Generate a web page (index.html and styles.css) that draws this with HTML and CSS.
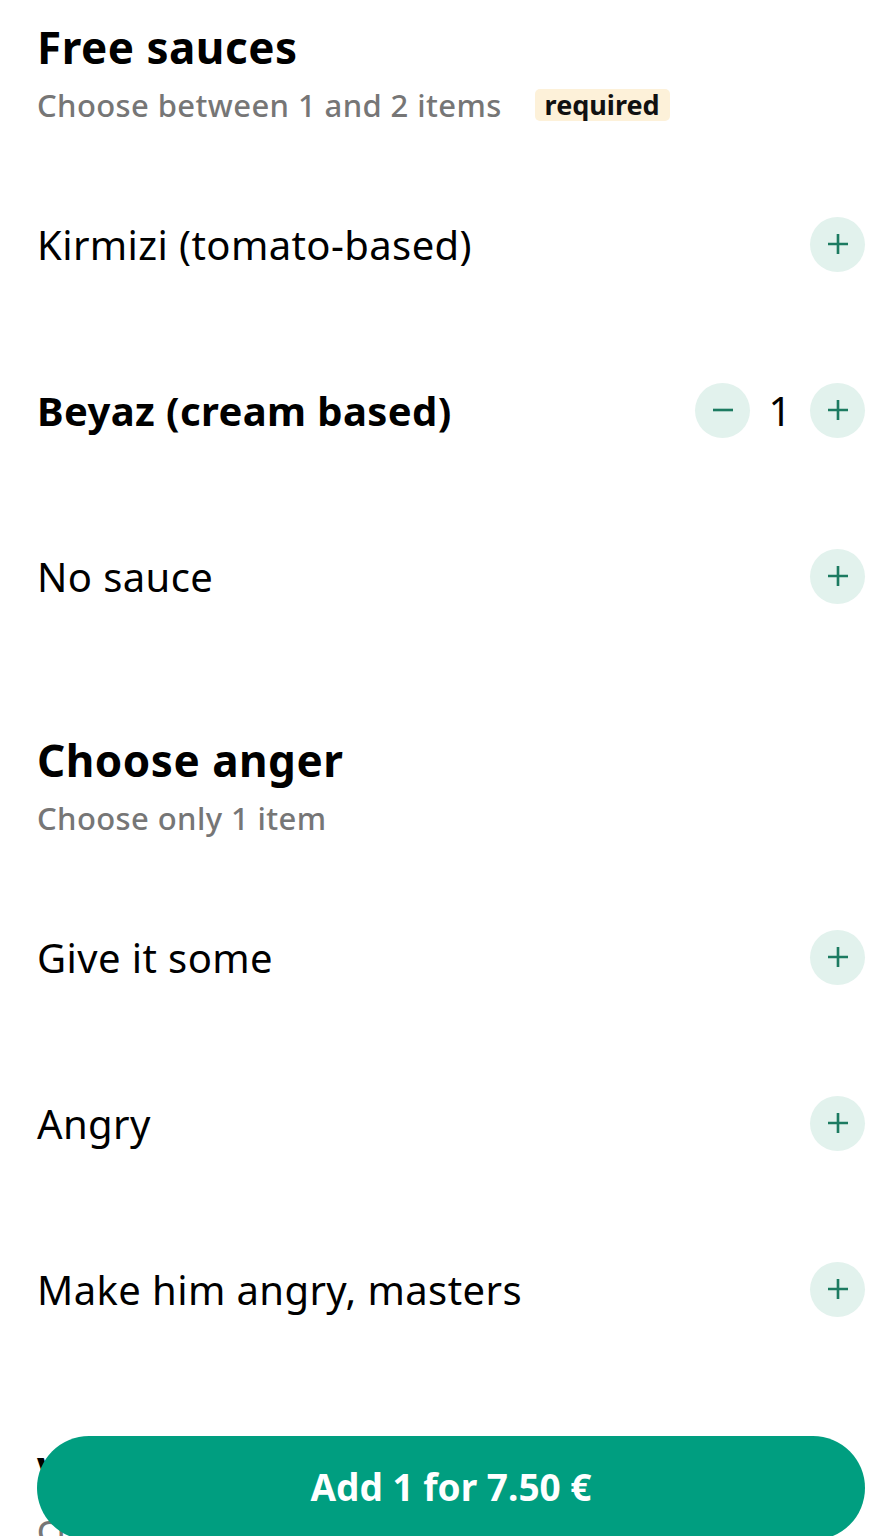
FILE: index.html
```html
<!DOCTYPE html>
<html>
<head>
    <meta charset="UTF-8">
    <title>Options</title>
    <link rel="stylesheet" href="styles.css">
</head>
<body>
    <div class="page">
        <div class="section">
            <div class="section-head">
                <h2>Free sauces</h2>
                <p class="hint">Choose between 1 and 2 items <span class="badge">required</span></p>
            </div>
            <div class="option">
                <span class="option-name">Kirmizi (tomato-based)</span>
                <div class="stepper">
                    <button class="round" type="button"><svg viewBox="0 0 24 24"><path d="M12 4v16M4 12h16"/></svg></button>
                </div>
            </div>
            <div class="option selected">
                <span class="option-name">Beyaz (cream based)</span>
                <div class="stepper">
                    <button class="round" type="button"><svg viewBox="0 0 24 24"><path d="M4 12h16"/></svg></button>
                    <span class="count">1</span>
                    <button class="round" type="button"><svg viewBox="0 0 24 24"><path d="M12 4v16M4 12h16"/></svg></button>
                </div>
            </div>
            <div class="option">
                <span class="option-name">No sauce</span>
                <div class="stepper">
                    <button class="round" type="button"><svg viewBox="0 0 24 24"><path d="M12 4v16M4 12h16"/></svg></button>
                </div>
            </div>
        </div>

        <div class="section">
            <div class="section-head">
                <h2>Choose anger</h2>
                <p class="hint">Choose only 1 item</p>
            </div>
            <div class="option">
                <span class="option-name">Give it some</span>
                <div class="stepper">
                    <button class="round" type="button"><svg viewBox="0 0 24 24"><path d="M12 4v16M4 12h16"/></svg></button>
                </div>
            </div>
            <div class="option">
                <span class="option-name">Angry</span>
                <div class="stepper">
                    <button class="round" type="button"><svg viewBox="0 0 24 24"><path d="M12 4v16M4 12h16"/></svg></button>
                </div>
            </div>
            <div class="option">
                <span class="option-name">Make him angry, masters</span>
                <div class="stepper">
                    <button class="round" type="button"><svg viewBox="0 0 24 24"><path d="M12 4v16M4 12h16"/></svg></button>
                </div>
            </div>
        </div>

        <div class="section">
            <div class="section-head">
                <h2>Vegetables</h2>
                <p class="hint">Choose up to 3 items</p>
            </div>
        </div>
    </div>

    <div class="footer">
        <button class="add-button" type="button">Add 1 for 7.50 €</button>
    </div>
</body>
</html>
```

FILE: styles.css
```css
body {
    font-family: "Noto Sans", Arial, sans-serif;
    background-color: #fff;
    color: #000;
    margin: 0;
    padding: 0;
}
.page {
    padding: 0 12px 0 37px;
}
.section {
    padding-top: 19px;
    margin-bottom: 54px;
}
.section-head {
    padding-bottom: 36px;
}
h2 {
    font-size: 44px;
    line-height: 56px;
    font-weight: 700;
    letter-spacing: 0.5px;
    margin: 0;
}
.hint {
    font-size: 31px;
    line-height: 40px;
    font-weight: 500;
    letter-spacing: 0.4px;
    color: #767676;
    margin: 10px 0 0;
    display: flex;
    align-items: center;
}
.badge {
    background-color: #fdf1d9;
    color: #111;
    font-size: 27px;
    font-weight: 700;
    line-height: 32px;
    letter-spacing: 0;
    padding: 0 10px;
    border-radius: 5px;
    margin-left: 33px;
}
.option {
    height: 166px;
    display: flex;
    align-items: center;
    justify-content: space-between;
}
.option-name {
    font-size: 40px;
    letter-spacing: 0.4px;
}
.option.selected .option-name {
    font-weight: 700;
}
.stepper {
    display: flex;
    align-items: center;
}
.round {
    width: 55px;
    height: 55px;
    border: none;
    border-radius: 50%;
    background-color: #e2f2ed;
    padding: 0;
    display: flex;
    align-items: center;
    justify-content: center;
    cursor: pointer;
}
.round svg {
    width: 30px;
    height: 30px;
    fill: none;
    stroke: #1c7b61;
    stroke-width: 2.1;
}
.count {
    font-size: 40px;
    width: 60px;
    text-align: center;
}
.footer {
    position: fixed;
    left: 37px;
    right: 12px;
    bottom: -4px;
}
.add-button {
    width: 100%;
    height: 104px;
    border: none;
    border-radius: 52px;
    background-color: #009e80;
    color: #fff;
    font-family: "Noto Sans", Arial, sans-serif;
    font-size: 37px;
    font-weight: 700;
    padding: 0 0 4px;
    cursor: pointer;
}
```
